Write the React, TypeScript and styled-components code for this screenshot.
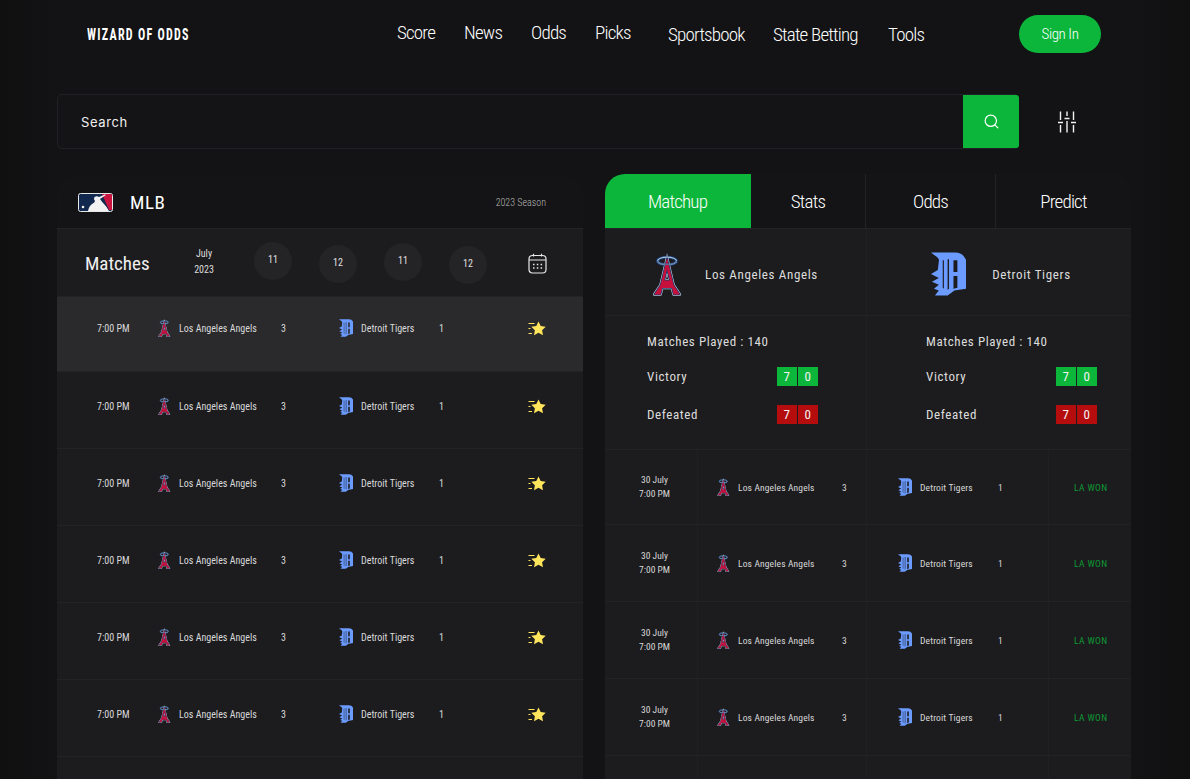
import styled, { createGlobalStyle } from "styled-components";
import { Search } from "lucide-react";

const GlobalStyle = createGlobalStyle`
    html, body {
        margin: 0;
        height: 779px;
        overflow: hidden;
        background: #121214;
    }
    * { box-sizing: border-box; }
`;

const cond = `"Roboto Condensed", "Liberation Sans Narrow", Roboto, sans-serif`;

const Page = styled.div`
    width: 1190px;
    height: 779px;
    overflow: hidden;
    color: #fff;
    font-family: ${cond};
    font-stretch: condensed;
    background: linear-gradient(90deg, #101011 0, #131315 60px, #131315 1130px, #101011 100%);
`;

const Header = styled.header`
    display: grid;
    grid-template-columns: 87px 310px 67px 67px 64px 73px 105px 115px 131px 82px;
    align-items: center;
    height: 68px;
`;

const Logo = styled.div`
    grid-column: 2;
    font-size: 16px;
    font-weight: 700;
    letter-spacing: 1.7px;
    white-space: nowrap;
    transform: scaleX(0.75);
    transform-origin: left center;
`;

const NavLink = styled.a<{ $low?: boolean }>`
    font-size: 19px;
    font-weight: 300;
    letter-spacing: -0.8px;
    color: #fff;
    margin-top: ${(p) => (p.$low ? "1px" : "-3px")};
`;

const SignIn = styled.button`
    height: 38px;
    border: 0;
    border-radius: 19px;
    background: #0bb63a;
    color: #fff;
    font-family: inherit;
    font-stretch: condensed;
    font-size: 15px;
    font-weight: 300;
    letter-spacing: -0.4px;
`;

const SearchRow = styled.div`
    display: flex;
    align-items: center;
    margin: 26px 0 27px 57px;
`;

const SearchBox = styled.div`
    display: flex;
    align-items: center;
    width: 962px;
    height: 55px;
    padding-left: 23px;
    border: 1px solid #202124;
    border-radius: 5px;
    background: #141416;
    font-family: Inter, sans-serif;
    font-size: 13px;
    font-weight: 400;
    letter-spacing: 0.6px;
    color: #f0f0f0;
    position: relative;
`;

const SearchButton = styled.div`
    position: absolute;
    right: -1px;
    top: 0;
    width: 56px;
    height: 53px;
    display: flex;
    align-items: center;
    justify-content: center;
    background: #0bb63a;
    border-radius: 0 3px 3px 0;
`;

const FilterButton = styled.div`
    margin-left: 39px;
    display: flex;
`;

const Panels = styled.main`
    display: flex;
    align-items: flex-start;
    gap: 22px;
    margin-left: 57px;
`;

const Panel = styled.section<{ $raised?: boolean }>`
    width: 526px;
    height: 640px;
    margin-top: ${(p) => (p.$raised ? "-2px" : "0")};
    border-radius: 20px 20px 0 0;
    background: #1c1c1f;
    overflow: hidden;
`;

const LeagueBar = styled.div`
    display: flex;
    align-items: center;
    height: 53px;
    padding: 0 37px 0 21px;
    background: #141416;
    border-bottom: 1px solid #232326;
`;

const LeagueName = styled.div`
    margin-left: 17px;
    font-size: 19px;
    letter-spacing: 0.6px;
`;

const Season = styled.div`
    margin-left: auto;
    font-size: 10px;
    font-weight: 300;
    color: #b9b9b9;
`;

const MatchesBar = styled.div`
    display: flex;
    align-items: flex-start;
    height: 68px;
    border-bottom: 1px solid #232326;
`;

const MatchesTitle = styled.div`
    width: 99px;
    margin: 23px 0 0 28px;
    font-size: 19px;
    color: #f0f0f0;
`;

const MonthYear = styled.div`
    width: 40px;
    margin-top: 17px;
    font-size: 10px;
    line-height: 16px;
    text-align: center;
    color: #dcdcdc;
`;

const Days = styled.div`
    display: flex;
    gap: 27px;
    margin-left: 30px;
`;

const DayCircle = styled.div<{ $drop: number }>`
    width: 38px;
    height: 38px;
    margin-top: ${(p) => p.$drop}px;
    padding-bottom: 3px;
    border-radius: 50%;
    background: #242427;
    display: flex;
    align-items: center;
    justify-content: center;
    font-size: 10px;
    color: #e0e0e0;
`;

const CalendarSlot = styled.div`
    margin: 24px 0 0 41px;
    display: flex;
`;

const MatchRow = styled.div<{ $active?: boolean }>`
    display: grid;
    grid-template-columns: 101px 21px 102px 58px 22px 78px 89px 20px;
    align-items: center;
    grid-auto-rows: 20px;
    height: 77px;
    padding-top: 24px;
    background: ${(p) => (p.$active ? "#2a2a2c" : "transparent")};
    border-bottom: 1px solid #232326;
    font-size: 10px;
    color: #d8d8d8;

    &:first-child {
        height: 75px;
        padding-top: 21px;
    }
`;

const Time = styled.div`
    padding-left: 40px;
`;

const TabBar = styled.nav`
    display: grid;
    grid-template-columns: 146px 115px 130px 135px;
    height: 55px;
    background: #141416;
    border-bottom: 1px solid #232326;
`;

const Tab = styled.div<{ $active?: boolean }>`
    display: flex;
    align-items: center;
    justify-content: center;
    font-size: 19px;
    font-weight: 300;
    letter-spacing: -0.8px;
    background: ${(p) => (p.$active ? "#0bb63a" : "transparent")};
    border-right: 1px solid ${(p) => (p.$active ? "#0bb63a" : "#232326")};

    &:last-child { border-right: 0; }
`;

const TwoCols = styled.div`
    display: grid;
    grid-template-columns: 262px 264px;
    border-bottom: 1px solid #232326;
`;

const TeamCell = styled.div<{ $pad: number; $gap: number }>`
    display: flex;
    align-items: center;
    gap: ${(p) => p.$gap}px;
    height: 86px;
    padding: 4px 0 0 ${(p) => p.$pad}px;
    font-size: 13px;
    letter-spacing: 0.65px;
    color: #dcdcdc;
    border-right: 1px solid #202023;

    &:last-child { border-right: 0; }
`;

const StatCell = styled.div<{ $pad: number }>`
    height: 133px;
    padding: 16px 0 0 ${(p) => p.$pad}px;
    border-right: 1px solid #202023;
    font-size: 13px;
    letter-spacing: 0.6px;
    color: #dcdcdc;

    &:last-child { border-right: 0; }
`;

const StatLine = styled.div`
    display: flex;
    align-items: center;
    justify-content: space-between;
    width: 171px;
    height: 19px;
    margin-top: 19px;

    &:first-child { margin-top: 0; }
    &:nth-child(2) { margin-top: 16px; }
`;

const Digits = styled.div`
    display: flex;
    gap: 1px;
`;

const Digit = styled.span<{ $tone: "win" | "loss" }>`
    width: 20px;
    height: 19px;
    display: flex;
    align-items: center;
    justify-content: center;
    font-size: 13px;
    background: ${(p) => (p.$tone === "win" ? "#0bb63a" : "#b50d0d")};
    color: #f4f4f4;
`;

const ResultRow = styled.div`
    display: grid;
    grid-template-columns: 93px 169px 182px 82px;
    height: 77px;
    border-bottom: 1px solid #232326;
    font-size: 9.5px;
    color: #d8d8d8;

    &:first-child { height: 75px; }
`;

const DateCell = styled.div`
    display: flex;
    align-items: center;
    justify-content: center;
    padding-left: 7px;
    line-height: 14px;
    text-align: center;
    border-right: 1px solid #202023;
`;

const TeamScoreCell = styled.div<{ $cols: string }>`
    display: grid;
    grid-template-columns: ${(p) => p.$cols};
    align-items: center;
    letter-spacing: 0.15px;
    border-right: 1px solid #202023;
`;

const Outcome = styled.div`
    display: flex;
    align-items: center;
    padding-left: 25px;
    color: #0e9a33;
    letter-spacing: 0.4px;
`;

const EmptyRow = styled.div`
    display: grid;
    grid-template-columns: 93px 169px 182px 82px;
    height: 77px;
`;

const EmptyCell = styled.div`
    border-right: 1px solid #202023;
`;

const angelsA =
    "M15 5 L21.5 32 L27.8 41.5 L21.5 41.5 L20 35 L10 35 L8.5 41.5 L2.2 41.5 L8.5 32 Z M15 16 L12.3 27.5 L17.7 27.5 Z";

const AngelsLogo = ({ size }: { size: number }) => (
    <svg width={size * 0.7} height={size} viewBox="0 0 30 43">
        <path d="M15 0 L16.4 6 L13.6 6 Z" fill="#a9c6df" />
        <ellipse cx="15" cy="8" rx="9.5" ry="3.8" fill="none" stroke="#1a3a6e" strokeWidth="3" />
        <ellipse cx="15" cy="8" rx="9.5" ry="3.8" fill="none" stroke="#a9c6df" strokeWidth="1.2" />
        <path d={angelsA} fill="#dfe8f0" stroke="#dfe8f0" strokeWidth="2.6" strokeLinejoin="round" fillRule="evenodd" />
        <path d={angelsA} fill="#1a3a6e" stroke="#1a3a6e" strokeWidth="1.6" strokeLinejoin="round" fillRule="evenodd" />
        <path d={angelsA} fill="#c8103c" fillRule="evenodd" />
        <path d="M5.5 8 A9.5 3.8 0 0 0 24.5 8 L23.4 8.6 A8.6 2.8 0 0 1 6.6 8.6 Z" fill="#a9c6df" stroke="#1a3a6e" strokeWidth="0.5" />
    </svg>
);

const TigersLogo = ({ size }: { size: number }) => (
    <svg width={size * 0.8} height={size} viewBox="0 0 36 44">
        <path
            fillRule="evenodd"
            fill="#6b9bff"
            d="M0 0 L25 0 Q33 0 36 8 L36 37 L29 38 L24 39 L17 44 L4 44 L8 39 L3 37 L8 33 L1 30 L8 26 L0 22 L7 18 L8 9 Q9 6 4 3 Z
               M12 8 L12 36 L13.2 37 L13.2 8 Z
               M17 7 L17 38 L18.4 37 L18.4 7 Z
               M23 8 L27 8 L27 20 L23 20 Z
               M23 24 L27 24 L27 36 L23 37 Z"
        />
    </svg>
);

const MlbLogo = () => (
    <svg width="35" height="19" viewBox="0 0 35 19">
        <rect x="0.5" y="0.5" width="34" height="18" rx="2" fill="#12294f" stroke="#e8e8e8" />
        <path d="M24 1 L33 1 Q34 1 34 2 L34 17 L31 17 Z" fill="#c8143f" />
        <path d="M10 18 Q11 13 14 11 Q17 9.5 17 8 Q15 6 16.5 4 Q19 2.5 21 4 L27 1.5 L28 2 L22 6 Q24 9 26 11 Q29 14 31 18 Z" fill="#f2f2f2" />
        <circle cx="5" cy="14" r="1.3" fill="#f2f2f2" />
    </svg>
);

const FavStar = () => (
    <svg width="18" height="15" viewBox="0 0 18 15">
        <path d="M10.5 0.5 L12.7 5 L17.7 5.7 L14.1 9.2 L15 14.2 L10.5 11.8 L6 14.2 L6.9 9.2 L3.3 5.7 L8.3 5 Z" fill="#ffe55c" />
        <path d="M0.5 2.5 H6.5 M0.5 7.5 H2.5 M0.5 12.5 H4" stroke="#ffe55c" strokeWidth="1" />
    </svg>
);

const CalendarIcon = () => (
    <svg width="19" height="21" viewBox="0 0 19 21" fill="none" stroke="#e8e8e8" strokeWidth="1.2">
        <rect x="1" y="2.5" width="17" height="17.5" rx="3.5" />
        <path d="M1 7 H18 M5.5 0.8 V3.5 M13.5 0.8 V3.5" />
        <path d="M5 11.5 H6.5 M8.8 11.5 H10.3 M12.6 11.5 H14.1 M5 15 H6.5 M8.8 15 H10.3 M12.6 15 H14.1" strokeWidth="1.6" />
    </svg>
);

const FilterIcon = () => (
    <svg width="18" height="22" viewBox="0 0 18 22" fill="none" stroke="#f2f2f2" strokeWidth="1.4">
        <path d="M2.5 0.5 V9 M2.5 14 V21.5 M9 0.5 V5 M9 10 V21.5 M15.5 0.5 V9 M15.5 14 V21.5" />
        <path d="M0 11.5 H5 M6.5 7.5 H11.5 M13 11.5 H18" strokeWidth="1.6" />
    </svg>
);

const navItems = [
    { label: "Score" },
    { label: "News" },
    { label: "Odds" },
    { label: "Picks" },
    { label: "Sportsbook", low: true },
    { label: "State Betting", low: true },
    { label: "Tools", low: true },
];

const dayCircles = [
    { day: 11, drop: 13 },
    { day: 12, drop: 16 },
    { day: 11, drop: 14 },
    { day: 12, drop: 17 },
];

const App = () => {
    return (
        <Page>
            <GlobalStyle />
            <Header>
                <Logo>WIZARD OF ODDS</Logo>
                {navItems.map((item) => (
                    <NavLink key={item.label} $low={item.low}>{item.label}</NavLink>
                ))}
                <SignIn>Sign In</SignIn>
            </Header>

            <SearchRow>
                <SearchBox>
                    Search
                    <SearchButton>
                        <Search size={17} color="#fff" strokeWidth={1.7} />
                    </SearchButton>
                </SearchBox>
                <FilterButton><FilterIcon /></FilterButton>
            </SearchRow>

            <Panels>
                <Panel>
                    <LeagueBar>
                        <MlbLogo />
                        <LeagueName>MLB</LeagueName>
                        <Season>2023 Season</Season>
                    </LeagueBar>
                    <MatchesBar>
                        <MatchesTitle>Matches</MatchesTitle>
                        <MonthYear>July<br />2023</MonthYear>
                        <Days>
                            {dayCircles.map((d, i) => (
                                <DayCircle key={i} $drop={d.drop}>{d.day}</DayCircle>
                            ))}
                        </Days>
                        <CalendarSlot><CalendarIcon /></CalendarSlot>
                    </MatchesBar>
                    <div>
                        {[0, 1, 2, 3, 4, 5].map((i) => (
                            <MatchRow key={i} $active={i === 0}>
                                <Time>7:00 PM</Time>
                                <AngelsLogo size={18} />
                                <div>Los Angeles Angels</div>
                                <div>3</div>
                                <TigersLogo size={18} />
                                <div>Detroit Tigers</div>
                                <div>1</div>
                                <FavStar />
                            </MatchRow>
                        ))}
                    </div>
                </Panel>

                <Panel $raised>
                    <TabBar>
                        <Tab $active>Matchup</Tab>
                        <Tab>Stats</Tab>
                        <Tab>Odds</Tab>
                        <Tab>Predict</Tab>
                    </TabBar>
                    <TwoCols>
                        <TeamCell $pad={47} $gap={23}><AngelsLogo size={43} />Los Angeles Angels</TeamCell>
                        <TeamCell $pad={64} $gap={26}><TigersLogo size={44} />Detroit Tigers</TeamCell>
                    </TwoCols>
                    <TwoCols>
                        {[42, 59].map((pad) => (
                            <StatCell key={pad} $pad={pad}>
                                <StatLine>Matches Played : 140</StatLine>
                                <StatLine>
                                    Victory
                                    <Digits><Digit $tone="win">7</Digit><Digit $tone="win">0</Digit></Digits>
                                </StatLine>
                                <StatLine>
                                    Defeated
                                    <Digits><Digit $tone="loss">7</Digit><Digit $tone="loss">0</Digit></Digits>
                                </StatLine>
                            </StatCell>
                        ))}
                    </TwoCols>
                    <div>
                        {[0, 1, 2, 3].map((i) => (
                            <ResultRow key={i}>
                                <DateCell><div>30 July<br />7:00 PM</div></DateCell>
                                <TeamScoreCell $cols="19px 21px 104px 20px">
                                    <span />
                                    <AngelsLogo size={18} />
                                    <div>Los Angeles Angels</div>
                                    <div>3</div>
                                </TeamScoreCell>
                                <TeamScoreCell $cols="31px 22px 78px 20px">
                                    <span />
                                    <TigersLogo size={18} />
                                    <div>Detroit Tigers</div>
                                    <div>1</div>
                                </TeamScoreCell>
                                <Outcome>LA WON</Outcome>
                            </ResultRow>
                        ))}
                        <EmptyRow>
                            <EmptyCell />
                            <EmptyCell />
                            <EmptyCell />
                        </EmptyRow>
                    </div>
                </Panel>
            </Panels>
        </Page>
    );
};

export default App;
